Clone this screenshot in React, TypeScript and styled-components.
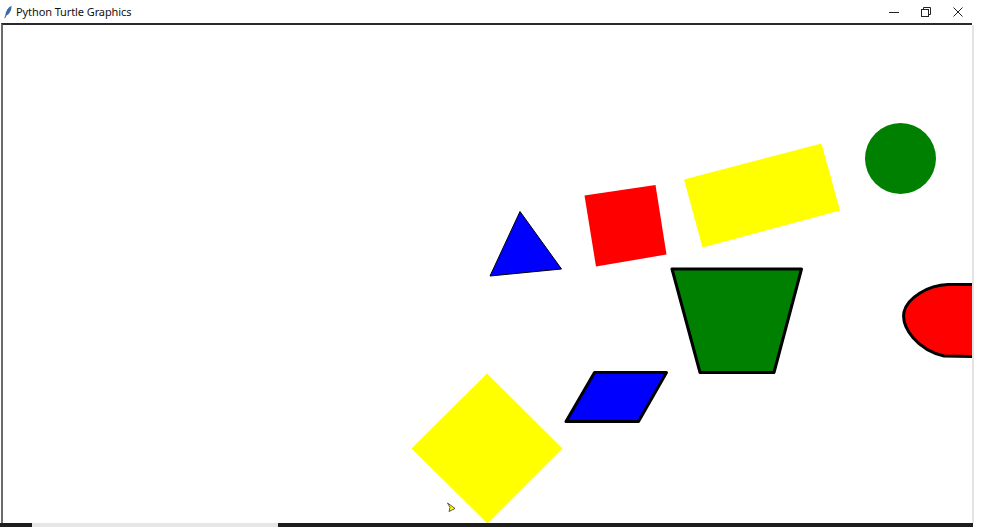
import styled, { createGlobalStyle } from 'styled-components';

const Global = createGlobalStyle`
  html, body { margin: 0; padding: 0; background: #fff; }
  body { font-family: "Noto Sans", "Open Sans", sans-serif; overflow: hidden; }
`;

export default function App() {
  return (
    <Window>
      <Global />
      <TitleBar>
        <TitleLeft>
          <svg width="10" height="14" viewBox="0 0 10 14">
            <path d="M8.5 0.8 C5 2.5 2.8 6 2.2 10.5 L1.2 13.2 L2.4 13 L3.2 10.8 C6.5 9.5 8.8 5 8.5 0.8 Z" fill="#3c6aa8" />
          </svg>
          <Title>Python Turtle Graphics</Title>
        </TitleLeft>
        <Controls>
          <ControlBtn>
            <svg width="10" height="10" viewBox="0 0 10 10">
              <line x1="0" y1="5.5" x2="10" y2="5.5" stroke="#222" strokeWidth="1" />
            </svg>
          </ControlBtn>
          <ControlBtn>
            <svg width="10" height="10" viewBox="0 0 10 10">
              <rect x="0.5" y="2.5" width="7" height="7" fill="none" stroke="#222" strokeWidth="1" />
              <path d="M2.5 2.5 V0.5 H9.5 V7.5 H7.5" fill="none" stroke="#222" strokeWidth="1" />
            </svg>
          </ControlBtn>
          <ControlBtn>
            <svg width="10" height="10" viewBox="0 0 10 10">
              <path d="M0.5 0.5 L9.5 9.5 M9.5 0.5 L0.5 9.5" stroke="#222" strokeWidth="1" />
            </svg>
          </ControlBtn>
        </Controls>
      </TitleBar>
      <Body>
        <CanvasFrame>
          <svg width="969" height="498" viewBox="3 25 969 498">
            <polygon points="490,276 520,211.5 561.5,269" fill="#0000ff" stroke="#000" strokeWidth="1" />
            <polygon points="584.5,195.5 655.5,185 666.5,254.5 596,266.5" fill="#ff0000" />
            <polygon points="684,179.5 821.5,143.5 840,210.5 702.5,247.5" fill="#ffff00" />
            <circle cx="900.5" cy="158.5" r="35.5" fill="#008000" />
            <polygon points="672,269 801.5,269 774,372.5 700,372.5" fill="#008000" stroke="#000" strokeWidth="3" strokeLinejoin="round" />
            <path d="M975 284.5 L948 284.5 C928 285 907 298 904 312 C901 328 918 350 944 356 L975 356.5" fill="#ff0000" stroke="#000" strokeWidth="3" />
            <polygon points="594.5,372.5 666.5,372.5 638.5,421.5 566,421.5" fill="#0000ff" stroke="#000" strokeWidth="3" strokeLinejoin="round" />
            <polygon points="487,373.5 562.5,448.5 487.5,523.5 411.5,448.5" fill="#ffff00" />
            <polygon points="447.5,503 455,508.5 449,511.5 450,507.5" fill="#ffff00" stroke="#333" strokeWidth="0.8" />
          </svg>
        </CanvasFrame>
        <RightTrack />
      </Body>
      <BottomBar>
        <BarSeg $w={32} $c="#1e1e1e" />
        <BarSeg $w={246} $c="#e6e6e6" />
        <BarSeg $w={695} $c="#1e1e1e" />
      </BottomBar>
    </Window>
  );
}

const Window = styled.div`
  width: 981px;
  height: 527px;
  display: flex;
  flex-direction: column;
  background: #fff;
`;

const TitleBar = styled.div`
  height: 23px;
  display: flex;
  align-items: center;
  justify-content: space-between;
  padding-left: 3px;
`;

const TitleLeft = styled.div`
  display: flex;
  align-items: center;
  gap: 3px;
`;

const Title = styled.span`
  font-size: 11px;
  color: #111;
  line-height: 1;
  letter-spacing: -0.1px;
`;

const Controls = styled.div`
  display: flex;
  align-items: center;
  gap: 22px;
  padding-right: 18px;
`;

const ControlBtn = styled.div`
  width: 10px;
  height: 10px;
  display: flex;
`;

const Body = styled.div`
  flex: 1;
  display: flex;
  min-height: 0;
`;

const CanvasFrame = styled.div`
  margin-left: 1px;
  border-top: 2px solid #2a2a2a;
  border-left: 2px solid #6a6a6a;
  background: #fff;
  overflow: hidden;
  display: flex;
  svg { display: block; }
`;

const RightTrack = styled.div`
  width: 2px;
  margin-top: 2px;
  background: #e4e4e4;
`;

const BottomBar = styled.div`
  height: 4px;
  display: flex;
`;

const BarSeg = styled.div<{ $w: number; $c: string }>`
  width: ${(p) => p.$w}px;
  background: ${(p) => p.$c};
`;
